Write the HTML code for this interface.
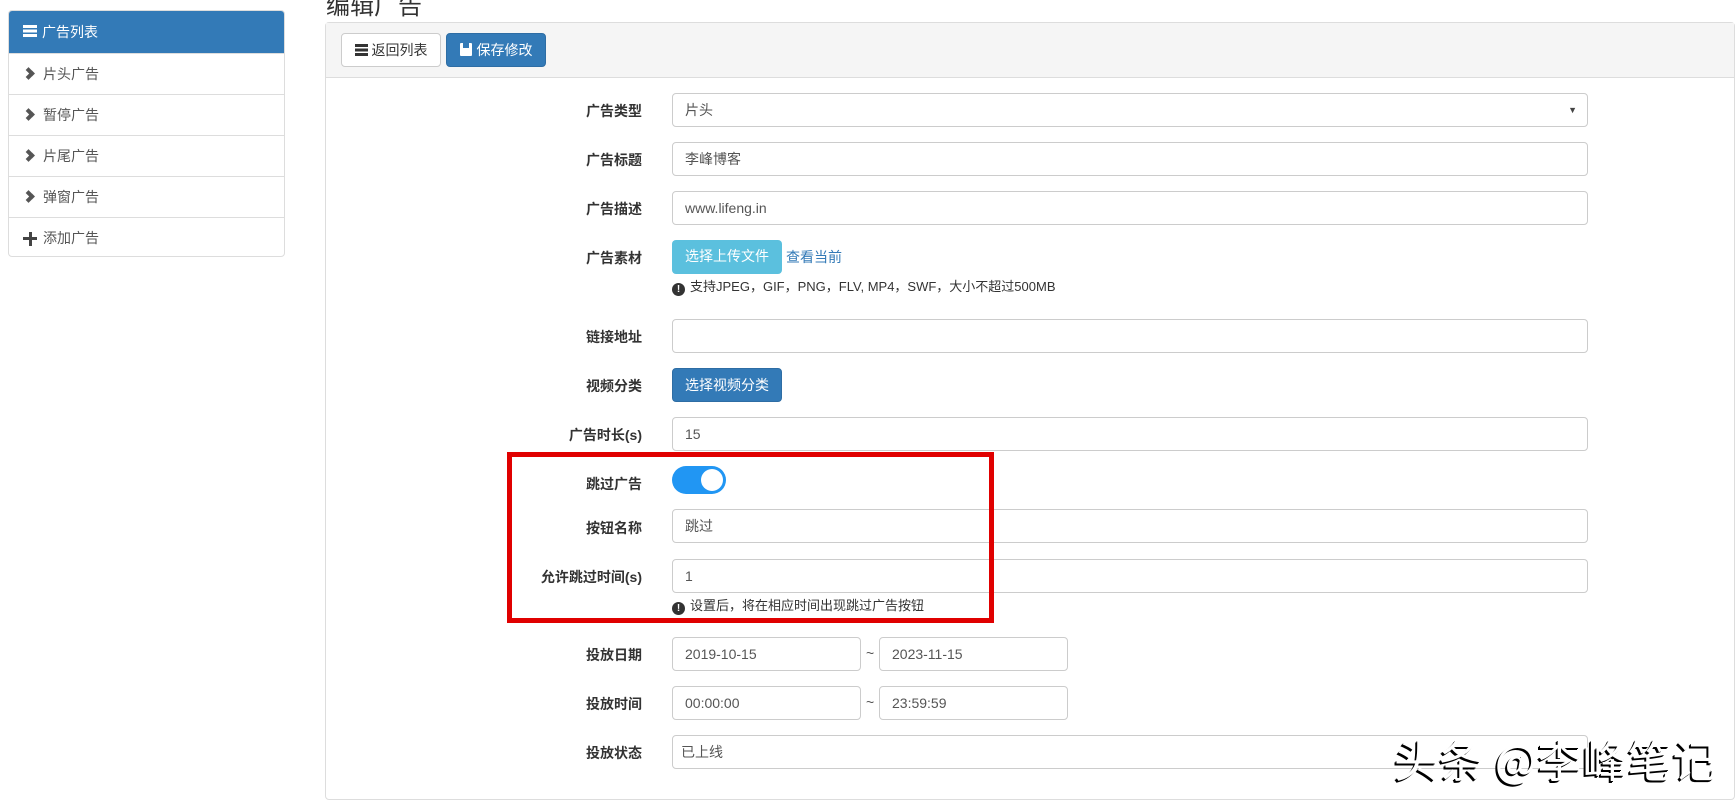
<!DOCTYPE html>
<html><head><meta charset="utf-8"><style>
*{box-sizing:border-box;margin:0;padding:0}
body{width:1735px;height:802px;overflow:hidden;background:#fff;font-family:"Liberation Sans","Noto Sans CJK SC",sans-serif;font-size:14px;color:#333;position:relative}
.a{position:absolute}
.side{left:8px;top:10px;width:277px;height:247px;border:1px solid #ddd;border-radius:4px;overflow:hidden}
.side div{height:41px;border-top:1px solid #ddd;padding-left:34px;line-height:40px;color:#555;position:relative}
.side div.h{background:#337ab7;color:#fff;border-top:none;height:42px;line-height:42px;padding-left:33px}
.chev{position:absolute;left:15px;top:15px;width:9px;height:9px;border-right:4px solid #555;border-top:4px solid #555;transform:rotate(45deg)}
.lbl{width:300px;left:342px;text-align:right;font-weight:bold;font-size:14px;color:#333}
.inp{left:672px;width:916px;height:34px;border:1px solid #ccc;border-radius:4px;padding:0 12px;line-height:32px;color:#555;font-size:14px}
.help{left:672px;font-size:13px;color:#333}
.help i{display:inline-block;width:13px;height:13px;border-radius:50%;background:#333;color:#fff;font-size:10px;font-style:normal;text-align:center;line-height:13px;font-weight:bold;margin-right:5px;vertical-align:-1px}
.btn{height:34px;border-radius:4px;line-height:32px;text-align:center;font-size:14px}
</style></head><body>
<div class="a side">
<div class="h"><span class="a" style="left:14px;top:14px;width:14px;height:12px;background:repeating-linear-gradient(#fff 0 3px,transparent 3px 4.5px)"></span>广告列表</div>
<div><span class="chev"></span>片头广告</div>
<div><span class="chev"></span>暂停广告</div>
<div><span class="chev"></span>片尾广告</div>
<div><span class="chev"></span>弹窗广告</div>
<div><span class="a" style="left:14px;top:19px;width:14px;height:3px;background:#444"></span><span class="a" style="left:19.5px;top:13.5px;width:3px;height:14px;background:#444"></span>添加广告</div>
</div>
<div class="a" style="left:326px;top:-14px;font-size:24px;color:#333">编辑广告</div>
<div class="a" style="left:325px;top:22px;width:1410px;height:778px;border:1px solid #ddd;border-radius:4px"></div>
<div class="a" style="left:326px;top:23px;width:1408px;height:55px;background:#f5f5f5;border-bottom:1px solid #ddd"></div>
<div class="a btn" style="left:341px;top:33px;width:100px;border:1px solid #ccc;background:#fff;color:#333"><span style="display:inline-block;width:13px;height:12px;margin-right:4px;vertical-align:-1px;background:repeating-linear-gradient(#333 0 3px,transparent 3px 4.5px)"></span>返回列表</div>
<div class="a btn" style="left:446px;top:33px;width:100px;background:#337ab7;border:1px solid #2e6da4;color:#fff"><span style="display:inline-block;width:12px;height:13px;margin-right:5px;vertical-align:-1px;background:#fff;border-radius:1px;position:relative"><span style="position:absolute;left:3px;top:0;width:6px;height:5px;background:#337ab7"></span></span>保存修改</div>

<div class="a lbl" style="top:101px">广告类型</div>
<div class="a inp" style="top:93px">片头<span class="a" style="right:10px;top:0;font-size:9px;color:#444">▼</span></div>
<div class="a lbl" style="top:150px">广告标题</div>
<div class="a inp" style="top:142px">李峰博客</div>
<div class="a lbl" style="top:199px">广告描述</div>
<div class="a inp" style="top:191px">www.lifeng.in</div>
<div class="a lbl" style="top:248px">广告素材</div>
<div class="a btn" style="left:672px;top:240px;width:110px;background:#5bc0de;color:#fff">选择上传文件</div>
<div class="a" style="left:786px;top:247px;color:#337ab7">查看当前</div>
<div class="a help" style="top:276px"><i>!</i>支持JPEG，GIF，PNG，FLV, MP4，SWF，大小不超过500MB</div>
<div class="a lbl" style="top:327px">链接地址</div>
<div class="a inp" style="top:319px"></div>
<div class="a lbl" style="top:376px">视频分类</div>
<div class="a btn" style="left:672px;top:368px;width:110px;background:#337ab7;color:#fff;border:1px solid #2e6da4">选择视频分类</div>
<div class="a lbl" style="top:425px">广告时长(s)</div>
<div class="a inp" style="top:417px">15</div>
<div class="a lbl" style="top:474px">跳过广告</div>
<div class="a" style="left:672px;top:466px;width:54px;height:28px;border-radius:14px;background:#2196f3"><span class="a" style="right:3px;top:3px;width:22px;height:22px;border-radius:50%;background:#fff"></span></div>
<div class="a lbl" style="top:518px">按钮名称</div>
<div class="a inp" style="top:509px">跳过</div>
<div class="a lbl" style="top:567px">允许跳过时间(s)</div>
<div class="a inp" style="top:559px">1</div>
<div class="a help" style="top:595px"><i>!</i>设置后，将在相应时间出现跳过广告按钮</div>
<div class="a" style="left:507px;top:452px;width:487px;height:171px;border:5px solid #e00000"></div>
<div class="a lbl" style="top:645px">投放日期</div>
<div class="a inp" style="top:637px;width:189px">2019-10-15</div>
<div class="a" style="left:866px;top:645px;color:#555">~</div>
<div class="a inp" style="top:637px;left:879px;width:189px">2023-11-15</div>
<div class="a lbl" style="top:694px">投放时间</div>
<div class="a inp" style="top:686px;width:189px">00:00:00</div>
<div class="a" style="left:866px;top:694px;color:#555">~</div>
<div class="a inp" style="top:686px;left:879px;width:189px">23:59:59</div>
<div class="a lbl" style="top:743px">投放状态</div>
<div class="a inp" style="top:735px;padding-left:8px">已上线</div>
<div class="a" style="left:1394px;top:726px;font-size:44px;letter-spacing:1px;color:#fff;text-shadow:-2px 2px 0 #000,-1px 1px 0 #000;font-family:'Noto Sans CJK SC',sans-serif;white-space:nowrap">头条 @李峰笔记</div>
</body></html>
